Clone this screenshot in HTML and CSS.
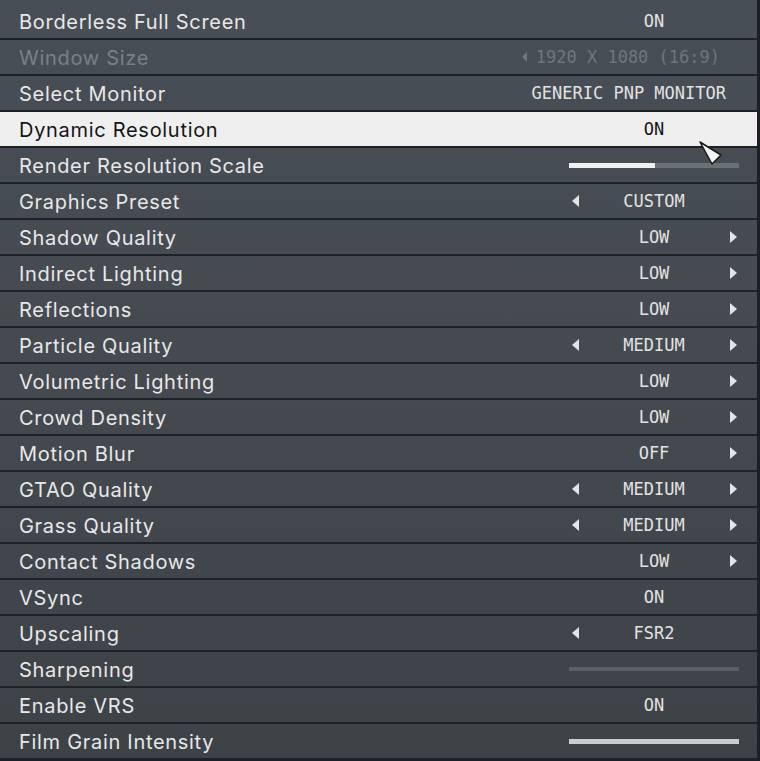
FILE: index.html
```html
<!DOCTYPE html>
<html>
<head>
<meta charset="utf-8">
<link rel="stylesheet" href="styles.css">
</head>
<body>
<div class="panel">
  <div class="row"><span class="label">Borderless Full Screen</span><div class="value"><i></i><span>ON</span><i></i></div></div>
  <div class="row disabled"><span class="label">Window Size</span><div class="value wide pad-ws"><b class="arrow left small"></b><span>1920 X 1080 (16:9)</span></div></div>
  <div class="row"><span class="label">Select Monitor</span><div class="value wide pad-mon"><span>GENERIC PNP MONITOR</span></div></div>
  <div class="row active"><span class="label">Dynamic Resolution</span><div class="value"><i></i><span>ON</span><i></i></div></div>
  <div class="row"><span class="label">Render Resolution Scale</span><div class="slider"><div class="fill" style="width:50.5%"></div></div></div>
  <div class="row"><span class="label">Graphics Preset</span><div class="value"><b class="arrow left"></b><span>CUSTOM</span><i></i></div></div>
  <div class="row"><span class="label">Shadow Quality</span><div class="value"><i></i><span>LOW</span><b class="arrow right"></b></div></div>
  <div class="row"><span class="label">Indirect Lighting</span><div class="value"><i></i><span>LOW</span><b class="arrow right"></b></div></div>
  <div class="row"><span class="label">Reflections</span><div class="value"><i></i><span>LOW</span><b class="arrow right"></b></div></div>
  <div class="row"><span class="label">Particle Quality</span><div class="value"><b class="arrow left"></b><span>MEDIUM</span><b class="arrow right"></b></div></div>
  <div class="row"><span class="label">Volumetric Lighting</span><div class="value"><i></i><span>LOW</span><b class="arrow right"></b></div></div>
  <div class="row"><span class="label">Crowd Density</span><div class="value"><i></i><span>LOW</span><b class="arrow right"></b></div></div>
  <div class="row"><span class="label">Motion Blur</span><div class="value"><i></i><span>OFF</span><b class="arrow right"></b></div></div>
  <div class="row"><span class="label">GTAO Quality</span><div class="value"><b class="arrow left"></b><span>MEDIUM</span><b class="arrow right"></b></div></div>
  <div class="row"><span class="label">Grass Quality</span><div class="value"><b class="arrow left"></b><span>MEDIUM</span><b class="arrow right"></b></div></div>
  <div class="row"><span class="label">Contact Shadows</span><div class="value"><i></i><span>LOW</span><b class="arrow right"></b></div></div>
  <div class="row"><span class="label">VSync</span><div class="value"><i></i><span>ON</span><i></i></div></div>
  <div class="row"><span class="label">Upscaling</span><div class="value"><b class="arrow left"></b><span>FSR2</span><i></i></div></div>
  <div class="row"><span class="label">Sharpening</span><div class="slider off"></div></div>
  <div class="row"><span class="label">Enable VRS</span><div class="value"><i></i><span>ON</span><i></i></div></div>
  <div class="row"><span class="label">Film Grain Intensity</span><div class="slider full"></div></div>

  <svg class="cursor" width="28" height="28" viewBox="0 0 28 28">
    <polygon points="2,2 23,15 14,24" fill="#f4f4f4" stroke="#1a1a1a" stroke-width="1.5" stroke-linejoin="round"/>
  </svg>
</div>
</body>
</html>
```

FILE: styles.css
```css
* { box-sizing: border-box; }
html, body { margin: 0; padding: 0; }
body {
  width: 760px;
  height: 761px;
  background: #1c2026;
  overflow: hidden;
}
.panel {
  position: relative;
  width: 760px;
  padding-top: 4px;
  border-right: 3px solid #1c2026;
  background: linear-gradient(180deg, #484e55 0%, #444a50 50%, #3d4247 100%);
}
.row {
  height: 36px;
  display: flex;
  align-items: center;
  padding: 0 18px 0 19px;
  border-bottom: 2px solid #1e2227;
}
.label {
  font-family: Inter, "Noto Sans", sans-serif;
  font-size: 20px;
  letter-spacing: 0.7px;
  color: #e8e8e8;
  white-space: nowrap;
  position: relative;
  top: 1px;
}
.value {
  margin-left: auto;
  width: 170px;
  display: grid;
  grid-template-columns: 12px 1fr 12px;
  align-items: center;
  justify-items: center;
  font-family: "DejaVu Sans Mono", "Liberation Mono", monospace;
  font-size: 17px;
  color: #e2e2e2;
  white-space: nowrap;
}
.value span { line-height: 20px; }
.value.wide {
  width: auto;
  display: flex;
  justify-content: flex-end;
  gap: 9px;
}
.pad-ws { padding-right: 19px; }
.pad-mon { padding-right: 13px; }
.arrow {
  width: 0;
  height: 0;
  border-top: 6px solid transparent;
  border-bottom: 6px solid transparent;
}
.arrow.left { border-right: 7px solid #e4e4e4; }
.arrow.right { border-left: 7px solid #e4e4e4; }
.arrow.small {
  border-top-width: 5px;
  border-bottom-width: 5px;
  border-right-width: 5px;
}
.disabled .label { color: #7b8085; }
.disabled .value { color: #70767b; }
.disabled .arrow.left { border-right-color: #70767b; }
.active {
  background: #efefef;
}
.active .label { color: #151515; }
.active .value { color: #151515; }
.slider {
  margin-left: auto;
  width: 170px;
  height: 5px;
  background: #6b7075;
}
.slider .fill {
  height: 100%;
  background: #eef0f2;
}
.slider.off { background: #5a5f64; height: 4px; }
.slider.full { background: #c9ccd1; }
.cursor {
  position: absolute;
  left: 698px;
  top: 140px;
}
```
